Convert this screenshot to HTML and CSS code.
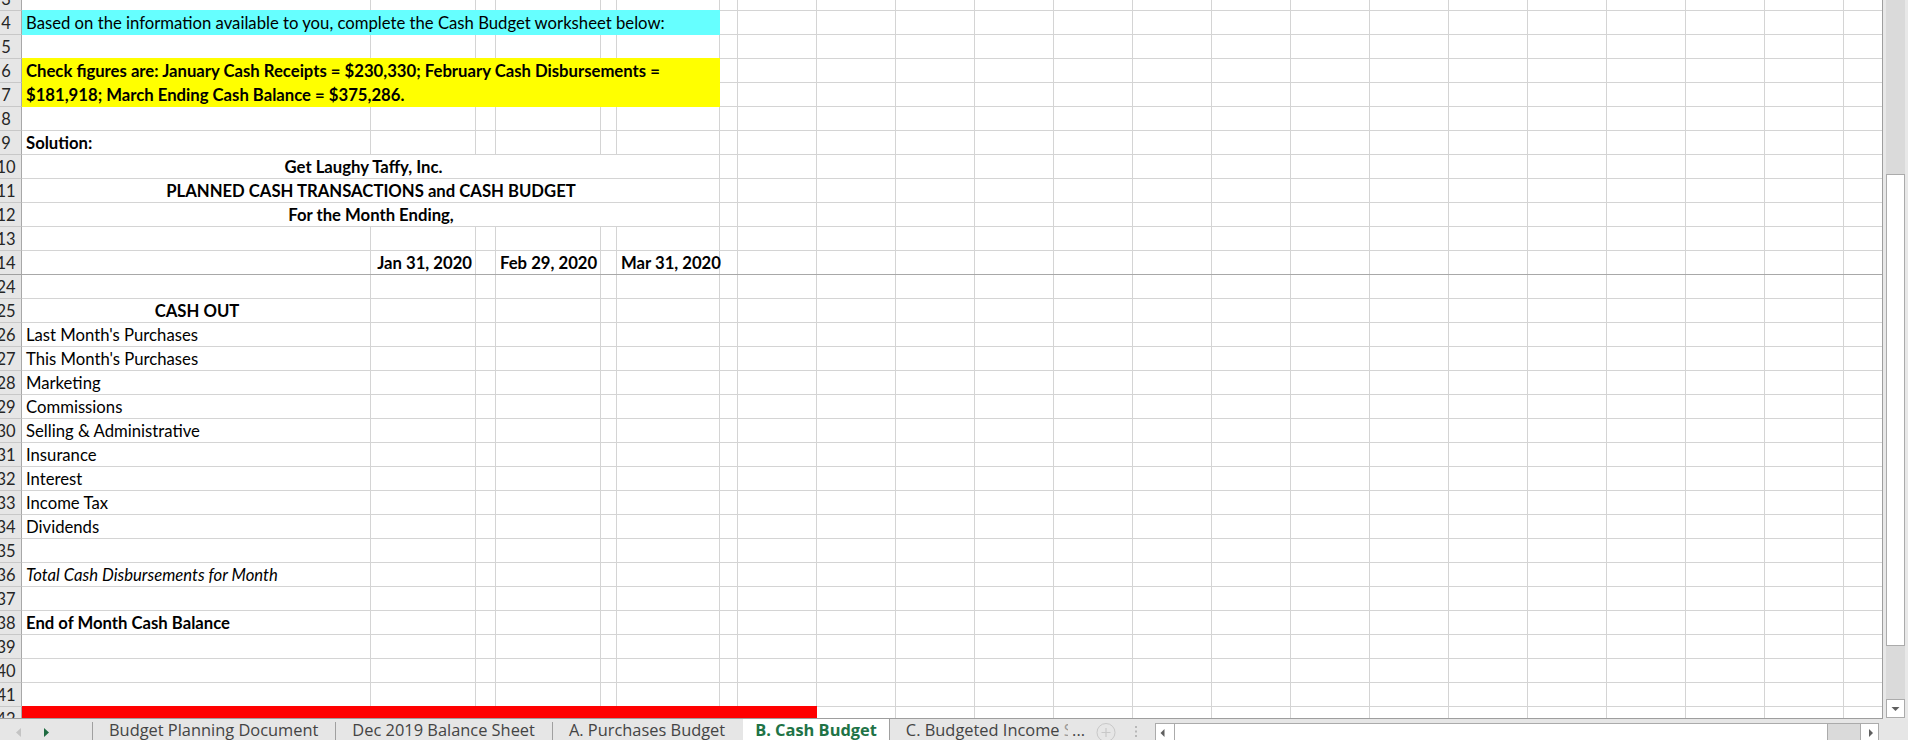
FILE: index.html
```html
<!DOCTYPE html>
<html lang="en">
<head>
<meta charset="utf-8">
<title>Cash Budget</title>
<link rel="stylesheet" href="styles.css">
</head>
<body>
<div class="app">
  <div class="sheet">
    <div class="rh rh-top"><span>3</span></div>
    <div class="rh"><span>4</span></div><div class="cell c-af fill cyan">Based on the information available to you, complete the Cash Budget worksheet below:</div>
    <div class="rh"><span>5</span></div>
    <div class="rh"><span>6</span></div><div class="cell c-af span2 fill yellow bold">Check figures are: January Cash Receipts = $230,330; February Cash Disbursements =<br>$181,918; March Ending Cash Balance = $375,286.</div>
    <div class="rh"><span>7</span></div>
    <div class="rh"><span>8</span></div>
    <div class="rh"><span>9</span></div><div class="cell c-a bold">Solution:</div>
    <div class="rh"><span>10</span></div><div class="cell c-af merge bold center pad-r">Get Laughy Taffy, Inc.</div>
    <div class="rh"><span>11</span></div><div class="cell c-af merge bold center">PLANNED CASH TRANSACTIONS and CASH BUDGET</div>
    <div class="rh"><span>12</span></div><div class="cell c-af merge bold center">For the Month Ending,</div>
    <div class="rh"><span>13</span></div>
    <div class="rh rh-freeze"><span>14</span></div><div class="cell c-b bold right">Jan 31, 2020</div><div class="cell c-d bold right">Feb 29, 2020</div><div class="cell c-f bold right tight">Mar 31, 2020</div>
    <div class="rh"><span>24</span></div>
    <div class="rh"><span>25</span></div><div class="cell c-a bold center">CASH OUT</div>
    <div class="rh"><span>26</span></div><div class="cell c-a">Last Month's Purchases</div>
    <div class="rh"><span>27</span></div><div class="cell c-a">This Month's Purchases</div>
    <div class="rh"><span>28</span></div><div class="cell c-a">Marketing</div>
    <div class="rh"><span>29</span></div><div class="cell c-a">Commissions</div>
    <div class="rh"><span>30</span></div><div class="cell c-a">Selling &amp; Administrative</div>
    <div class="rh"><span>31</span></div><div class="cell c-a">Insurance</div>
    <div class="rh"><span>32</span></div><div class="cell c-a">Interest</div>
    <div class="rh"><span>33</span></div><div class="cell c-a">Income Tax</div>
    <div class="rh"><span>34</span></div><div class="cell c-a">Dividends</div>
    <div class="rh"><span>35</span></div>
    <div class="rh"><span>36</span></div><div class="cell c-a italic">Total Cash Disbursements for Month</div>
    <div class="rh"><span>37</span></div>
    <div class="rh"><span>38</span></div><div class="cell c-a bold">End of Month Cash Balance</div>
    <div class="rh"><span>39</span></div>
    <div class="rh"><span>40</span></div>
    <div class="rh"><span>41</span></div>
    <div class="rh rh-bottom"><span>42</span></div><div class="cell c-ah fill red"></div>
  </div>

  <div class="vscroll">
    <div class="vtrack">
      <div class="vthumb"></div>
      <div class="vbtn">
        <svg width="17" height="17" viewBox="0 0 17 17"><polygon points="4.5,7 12.5,7 8.5,11" fill="#5f5f5f"/></svg>
      </div>
    </div>
  </div>

  <div class="tabbar">
    <div class="tabnav">
      <svg width="92" height="21" viewBox="0 0 92 21">
        <polygon points="21,9 21,18 16,13.5" fill="#c4c4c4"/>
        <polygon points="44,9 44,18 49,13.5" fill="#1e6b41"/>
      </svg>
    </div>
    <div class="sep"></div>
    <div class="tab">Budget Planning Document</div>
    <div class="sep"></div>
    <div class="tab">Dec 2019 Balance Sheet</div>
    <div class="sep"></div>
    <div class="tab tab-last">A. Purchases Budget</div>
    <div class="tab active">B. Cash Budget</div>
    <div class="tab tab-c">C. Budgeted Income <span class="clip">S</span> ...</div>
    <div class="addsheet">
      <svg width="22" height="21" viewBox="0 0 22 21">
        <circle cx="11" cy="13.5" r="9" fill="none" stroke="#c8c8c8" stroke-width="1"/>
        <path d="M11 9v9M6.5 13.5h9" stroke="#c8c8c8" stroke-width="1.2"/>
      </svg>
    </div>
    <div class="dots">
      <svg width="6" height="21" viewBox="0 0 6 21">
        <rect x="2" y="7" width="2" height="2" fill="#b8b8b8"/>
        <rect x="2" y="11.5" width="2" height="2" fill="#b8b8b8"/>
        <rect x="2" y="16" width="2" height="2" fill="#b8b8b8"/>
      </svg>
    </div>
    <div class="hscroll">
      <div class="hbtn">
        <svg width="18" height="17" viewBox="0 0 18 17"><polygon points="8.5,5 8.5,13 4.5,9" fill="#5f5f5f"/></svg>
      </div>
      <div class="hthumb"></div>
      <div class="htrack"></div>
      <div class="hbtn hbtn-r">
        <svg width="17" height="17" viewBox="0 0 17 17"><polygon points="8,5 8,13 12,9" fill="#5f5f5f"/></svg>
      </div>
    </div>
  </div>
</div>
</body>
</html>
```

FILE: styles.css
```css
html, body {
  margin: 0;
  padding: 0;
  background: #fff;
}

body {
  width: 1908px;
  height: 740px;
  overflow: hidden;
  font-family: "Lato", "Liberation Sans", sans-serif;
  color: #000;
}

.app {
  display: grid;
  grid-template-columns: 1882px 26px;
  grid-template-rows: 719px 21px;
  width: 1908px;
  height: 740px;
}

/* ---------- worksheet ---------- */
.sheet {
  grid-column: 1;
  grid-row: 1;
  display: grid;
  grid-template-columns: 22px 349px 105px 20px 105px 16px 103px 18px 79px 1fr;
  grid-template-rows: 11px repeat(29, 24px) 11px;
  box-sizing: border-box;
  height: 719px;
  border-bottom: 1px solid #9e9e9e;
  overflow: hidden;
  font-size: 16.7px;
  background-color: #fff;
  background-image:
    linear-gradient(#a8a8a8, #a8a8a8),
    repeating-linear-gradient(to bottom, #d4d4d4 0 1px, transparent 1px 24px),
    linear-gradient(#d4d4d4, #d4d4d4),
    linear-gradient(#d4d4d4, #d4d4d4),
    linear-gradient(#d4d4d4, #d4d4d4),
    linear-gradient(#d4d4d4, #d4d4d4),
    linear-gradient(#d4d4d4, #d4d4d4),
    linear-gradient(#d4d4d4, #d4d4d4),
    repeating-linear-gradient(to right, #d4d4d4 0 1px, transparent 1px 79px);
  background-size:
    100% 1px,
    100% calc(100% - 10px),
    1px 100%, 1px 100%, 1px 100%, 1px 100%, 1px 100%, 1px 100%,
    calc(100% - 737px) 100%;
  background-position:
    0 274px,
    0 10px,
    370px 0, 475px 0, 495px 0, 600px 0, 616px 0, 719px 0,
    737px 0;
  background-repeat: no-repeat;
}

/* row headers */
.rh {
  grid-column: 1;
  box-sizing: border-box;
  background: #e6e6e6;
  border-right: 1px solid #a8a8a8;
  border-bottom: 1px solid #c8c8c8;
  overflow: hidden;
  color: #262626;
  font-size: 16.5px;
  line-height: 23px;
  padding-top: 1px;
}

.rh span {
  display: block;
  width: 32px;
  margin-left: -10px;
  text-align: center;
}

.rh-top span {
  margin-top: -13px;
}

.rh-freeze {
  border-bottom-color: #a0a0a0;
}

.rh-bottom {
  border-bottom: none;
}

/* cells */
.cell {
  white-space: nowrap;
  line-height: 23px;
  padding: 1px 3px 0 4px;
  min-width: 0;
}

.c-a  { grid-column: 2; }
.c-b  { grid-column: 3; }
.c-d  { grid-column: 5; }
.c-f  { grid-column: 7; }
.c-af { grid-column: 2 / span 6; }
.c-ah { grid-column: 2 / span 8; }
.span2 { grid-row: span 2; }

.bold   { font-weight: 700; }
.italic { font-style: italic; }
.center { text-align: center; }
.right  { text-align: right; padding-right: 4px; }
.right.tight { padding-right: 1px; }
.pad-r  { padding-right: 18px; }

.merge {
  background: #fff;
  margin: 0 1px 1px 0;
}

.fill {
  margin-top: -1px;
  padding-top: 2px;
}

.cyan   { background: #66ffff; }
.yellow { background: #ffff00; line-height: 24px; padding-top: 1px; }
.red    { background: #ff0000; margin-top: -1px; }

/* ---------- vertical scrollbar ---------- */
.vscroll {
  grid-column: 2;
  grid-row: 1;
  box-sizing: border-box;
  border-left: 1px solid #9e9e9e;
  background: #e8e8e8;
  padding: 0 3px 1px 3px;
  display: flex;
  flex-direction: column;
}

.vtrack {
  flex: 1;
  background: #dadada;
  display: flex;
  flex-direction: column;
}

.vthumb {
  margin-top: 174px;
  height: 472px;
  box-sizing: border-box;
  background: #fff;
  border: 1px solid #ababab;
}

.vbtn {
  margin-top: auto;
  height: 19px;
  box-sizing: border-box;
  background: #fff;
  border: 1px solid #ababab;
  display: flex;
}

/* ---------- sheet tabs ---------- */
.tabbar {
  grid-column: 1 / span 2;
  grid-row: 2;
  display: flex;
  align-items: stretch;
  background: #e6e6e6;
  font-family: "Open Sans", "Noto Sans", sans-serif;
  font-size: 16.4px;
  line-height: 21px;
  color: #444;
  overflow: hidden;
}

.tabnav {
  width: 92px;
  flex: none;
}

.tabnav svg,
.addsheet svg,
.dots svg,
.hbtn svg,
.vbtn svg {
  display: block;
}

.sep {
  width: 1px;
  flex: none;
  margin-top: 3px;
  background: #a0a0a0;
}

.tab {
  flex: none;
  padding: 0 17px 0 16px;
  white-space: nowrap;
}

.tab-last {
  padding-right: 18px;
}

.tab.active {
  background: #fff;
  color: #217346;
  font-weight: 700;
  padding: 0 12px;
}

.tab-c {
  border-left: 1px solid #a0a0a0;
  padding: 0 10px 0 16px;
}

.clip {
  display: inline-block;
  width: 4px;
  overflow: hidden;
  vertical-align: top;
  color: #9a9a9a;
}

.addsheet {
  flex: none;
}

.dots {
  flex: none;
  margin-left: 16px;
}

.hscroll {
  flex: none;
  margin-left: auto;
  margin-right: 29px;
  margin-top: 4px;
  width: 724px;
  height: 18px;
  box-sizing: border-box;
  border: 1px solid #ababab;
  background: #dadada;
  display: flex;
}

.hbtn {
  width: 18px;
  flex: none;
  background: #fff;
}

.hthumb {
  width: 654px;
  flex: none;
  box-sizing: border-box;
  background: #fff;
  border-left: 1px solid #ababab;
  border-right: 1px solid #ababab;
}

.htrack {
  flex: 1;
}

.hbtn-r {
  width: 17px;
  border-left: 1px solid #ababab;
}
```
